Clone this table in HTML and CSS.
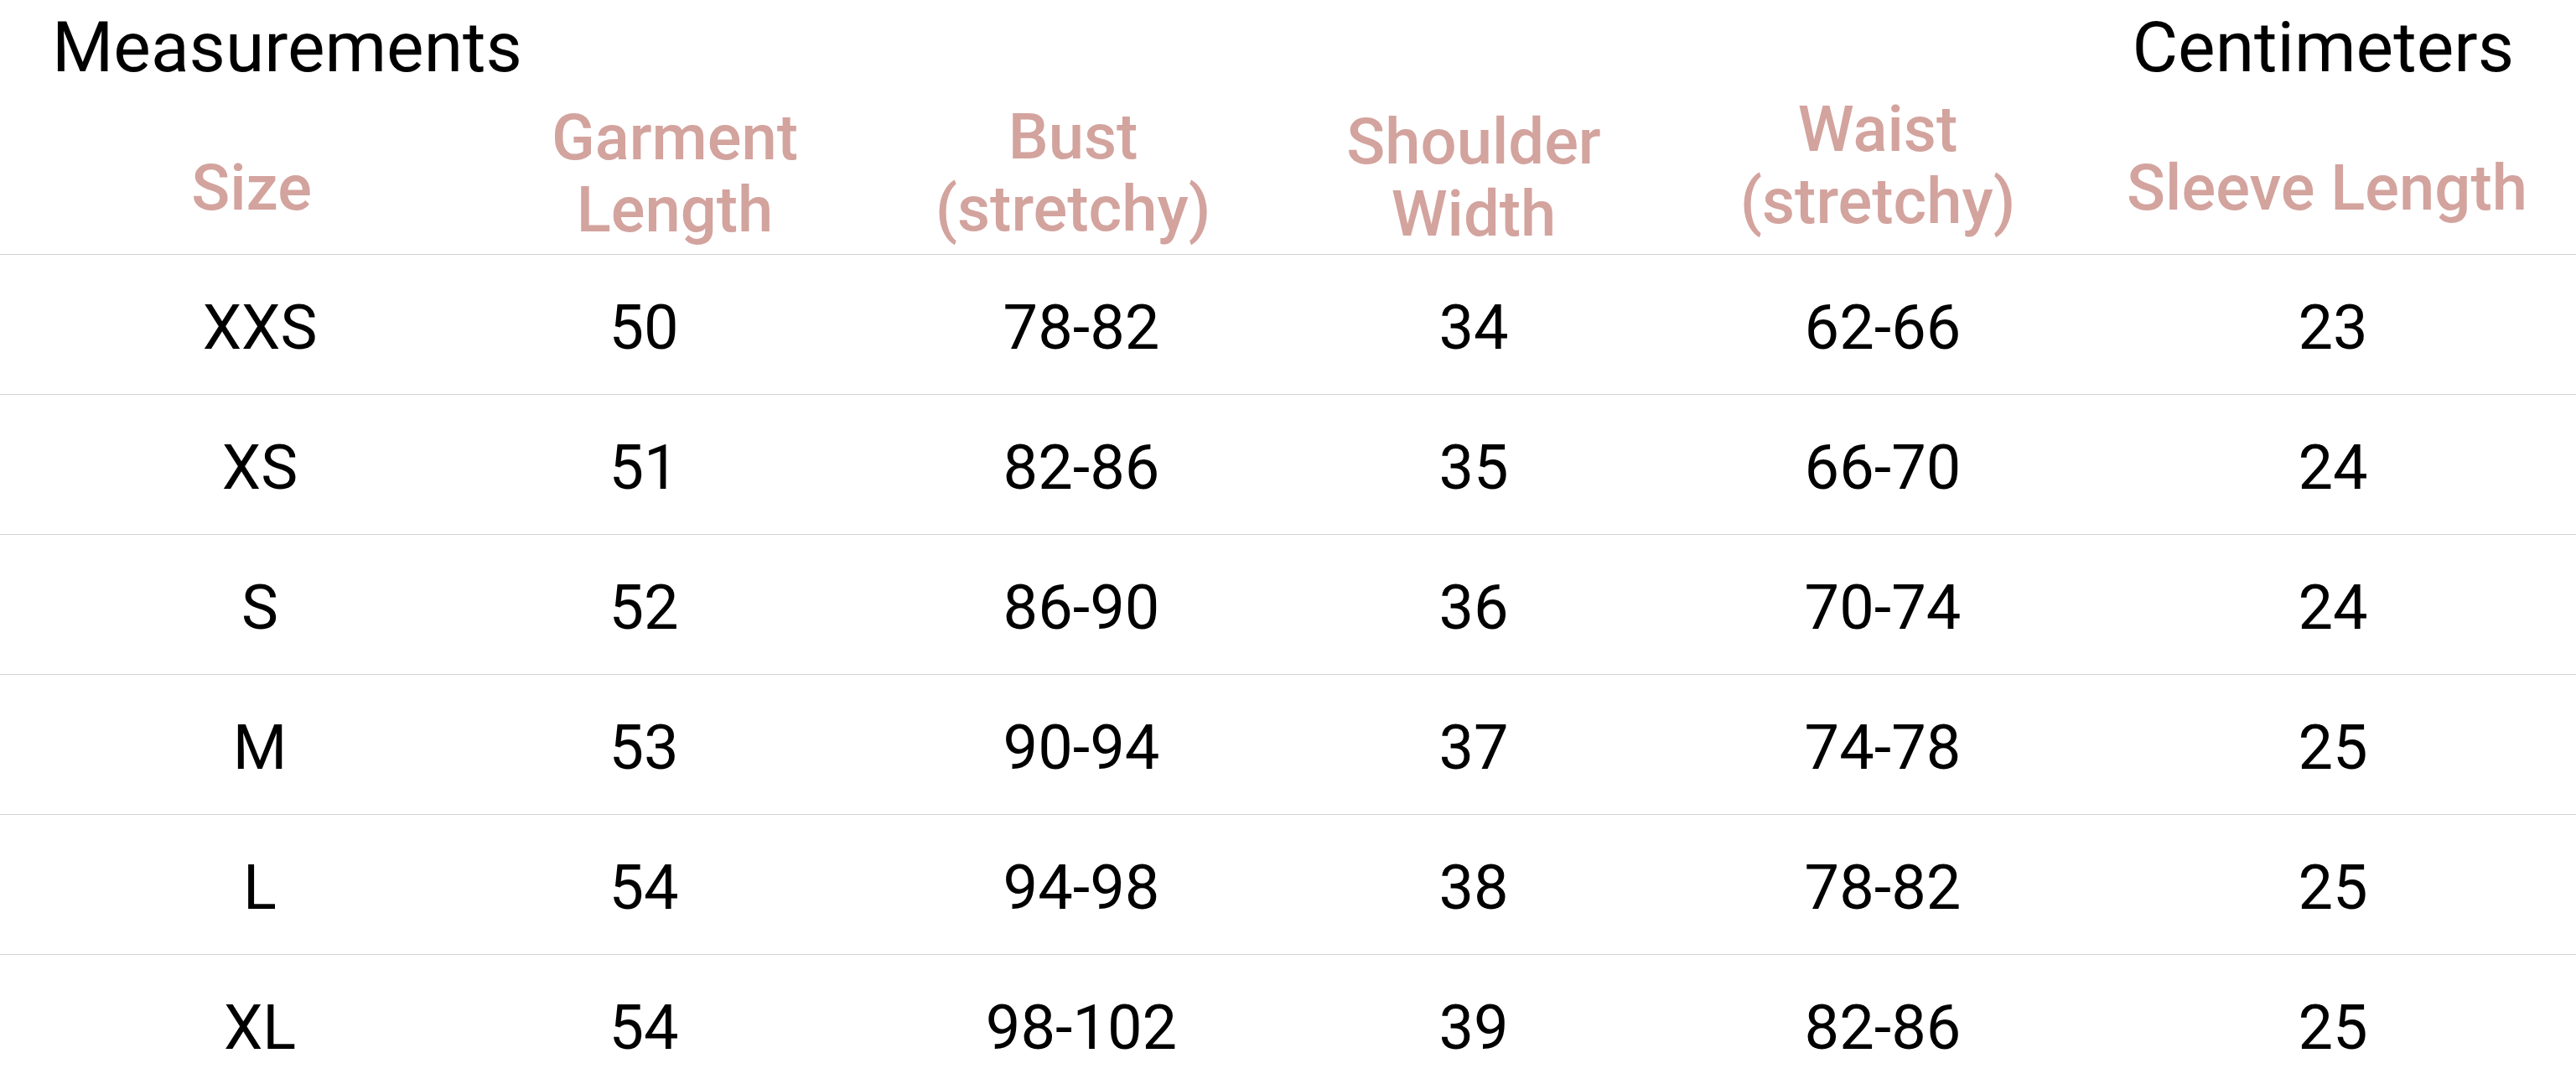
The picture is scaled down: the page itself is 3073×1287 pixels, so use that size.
FILE: index.html
```html
<!DOCTYPE html>
<html lang="en">
<head>
<meta charset="utf-8">
<title>Measurements</title>
<link rel="stylesheet" href="styles.css">
</head>
<body>
<div class="chart">
  <div class="title-row">
    <div class="title">Measurements</div>
    <div class="title">Centimeters</div>
  </div>
  <div class="grid">
    <div class="hcell single size">Size</div>
    <div class="hcell garment">Garment<br>Length</div>
    <div class="hcell bust">Bust<br>(stretchy)</div>
    <div class="hcell shoulder">Shoulder<br>Width</div>
    <div class="hcell waist">Waist<br>(stretchy)</div>
    <div class="hcell single sleeve">Sleeve Length</div>

    <div class="cell">XXS</div><div class="cell">50</div><div class="cell">78-82</div><div class="cell">34</div><div class="cell">62-66</div><div class="cell end">23</div>
    <div class="cell">XS</div><div class="cell">51</div><div class="cell">82-86</div><div class="cell">35</div><div class="cell">66-70</div><div class="cell end">24</div>
    <div class="cell">S</div><div class="cell">52</div><div class="cell">86-90</div><div class="cell">36</div><div class="cell">70-74</div><div class="cell end">24</div>
    <div class="cell">M</div><div class="cell">53</div><div class="cell">90-94</div><div class="cell">37</div><div class="cell">74-78</div><div class="cell end">25</div>
    <div class="cell">L</div><div class="cell">54</div><div class="cell">94-98</div><div class="cell">38</div><div class="cell">78-82</div><div class="cell end">25</div>
    <div class="cell last">XL</div><div class="cell last">54</div><div class="cell last">98-102</div><div class="cell last">39</div><div class="cell last">82-86</div><div class="cell last end">25</div>
  </div>
</div>
</body>
</html>
```
FILE: styles.css
```css
html, body {
  margin: 0;
  padding: 0;
  background: #ffffff;
}

body {
  font-family: Roboto, "Liberation Sans", Arial, sans-serif;
  color: #000000;
  width: 3073px;
  height: 1287px;
  overflow: hidden;
}

.chart {
  display: flex;
  flex-direction: column;
}

.title-row {
  display: flex;
  justify-content: space-between;
  padding: 0 74px 0 62px;
  height: 110px;
}

.title {
  font-size: 84px;
  line-height: 106px;
  padding-top: 4px;
  font-weight: 400;
  white-space: nowrap;
}

.grid {
  display: grid;
  grid-template-columns: 620px 296px 748px 188px 788px 433px;
  grid-template-rows: 194px;
  grid-auto-rows: 167px;
}

.hcell {
  height: 194px;
  box-sizing: border-box;
  border-bottom: 1px solid #cfcfcf;
  display: flex;
  align-items: center;
  justify-content: center;
  text-align: center;
  white-space: nowrap;
  font-size: 76px;
  line-height: 86px;
  font-weight: 500;
  color: #d3a39e;
}

.hcell.single {
  padding-top: 34px;
}

.hcell.size {
  padding-right: 20px;
}

.hcell.garment {
  padding-left: 74px;
}

.hcell.bust {
  padding-right: 20px;
  padding-bottom: 2px;
}

.hcell.shoulder {
  padding-top: 10px;
}

.hcell.waist {
  padding-bottom: 20px;
  padding-right: 12px;
}

.hcell.sleeve {
  padding-right: 161px;
}

.cell {
  box-sizing: border-box;
  border-bottom: 1px solid #d4d4d4;
  display: flex;
  align-items: center;
  justify-content: center;
  white-space: nowrap;
  font-size: 74px;
  font-weight: 400;
  color: #000000;
  padding-top: 6px;
}

.cell.end {
  padding-right: 147px;
}

.cell.last {
  border-bottom: none;
}
```
